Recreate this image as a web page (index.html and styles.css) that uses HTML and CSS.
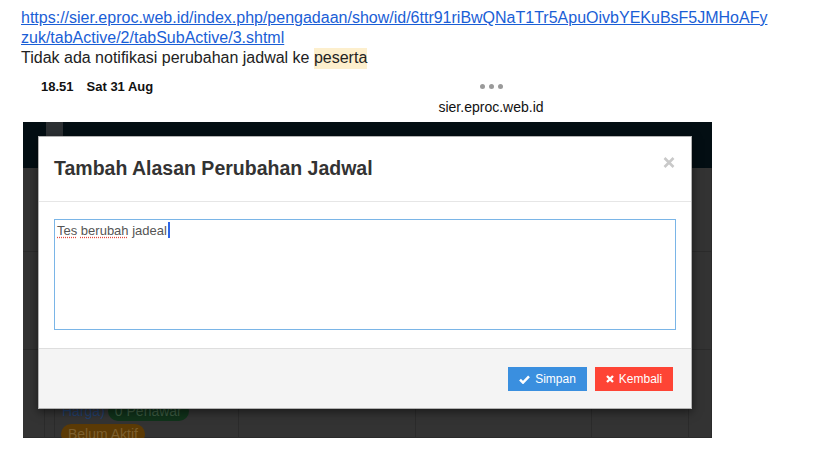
FILE: index.html
```html
<!DOCTYPE html>
<html lang="id">
<head>
<meta charset="utf-8">
<title>Tambah Alasan Perubahan Jadwal</title>
<link rel="stylesheet" href="styles.css">
</head>
<body>
<div class="mail">
  <a class="link" href="#">https://sier.eproc.web.id/index.php/pengadaan/show/id/6ttr91riBwQNaT1Tr5ApuOivbYEKuBsF5JMHoAFy<br>zuk/tabActive/2/tabSubActive/3.shtml</a>
  <div class="note">Tidak ada notifikasi perubahan jadwal ke <mark class="hl">peserta</mark></div>
</div>
<div class="shot">
  <div class="status">
    <div class="time"><span>18.51</span><span class="date">Sat 31 Aug</span></div>
    <div class="addr">
      <div class="dots"><i></i><i></i><i></i></div>
      <div class="host">sier.eproc.web.id</div>
    </div>
  </div>
  <div class="screen">
    <div class="topbar"><span class="tb-icon"></span></div>
    <div class="table">
      <div class="cell"></div><div class="cell"></div><div class="cell"></div><div class="cell"></div><div class="cell"></div><div class="cell"></div><div class="cell"></div>
      <div class="cell"></div><div class="cell"></div><div class="cell"></div><div class="cell"></div><div class="cell"></div><div class="cell"></div><div class="cell"></div>
      <div class="cell"></div><div class="cell"></div>
      <div class="cell info">
        <div class="line"><span class="harga">Harga)</span><span class="badge green">0 Penawar</span></div>
        <div class="line"><span class="badge orange">Belum Aktif</span></div>
      </div>
      <div class="cell"></div><div class="cell"></div><div class="cell"></div><div class="cell"></div>
    </div>
    <div class="modal">
      <div class="modal-header">
        <h4 class="modal-title">Tambah Alasan Perubahan Jadwal</h4>
        <svg class="close" width="12" height="11" viewBox="0 0 12 11"><path d="M1.5 1 L10.5 10 M10.5 1 L1.5 10" stroke="#c9c9c9" stroke-width="2.6" fill="none"/></svg>
      </div>
      <div class="modal-body">
        <div class="textarea"><span class="typo">Tes</span> <span class="typo">berubah</span> jadeal<span class="caret"></span></div>
      </div>
      <div class="modal-footer">
        <button class="btn btn-save" type="button"><svg width="11" height="9" viewBox="0 0 11 9"><path d="M1 4.6 L4 7.6 L10 1.4" stroke="#fff" stroke-width="2.5" fill="none"/></svg>Simpan</button>
        <button class="btn btn-back" type="button"><svg width="8" height="8" viewBox="0 0 8 8"><path d="M1 1 L7 7 M7 1 L1 7" stroke="#fff" stroke-width="2.3" fill="none"/></svg>Kembali</button>
      </div>
    </div>
  </div>
</div>
</body>
</html>
```
FILE: styles.css
```css
* { box-sizing: border-box; }
body {
  margin: 0;
  background: #fff;
  font-family: "Liberation Sans", Arial, sans-serif;
  color: #222;
}
.mail {
  padding: 8px 0 0 21px;
  font-size: 16px;
  line-height: 20px;
}
.link {
  display: block;
  color: #1a5ed6;
  text-decoration: underline;
}
.note { color: #222; }
.hl {
  background: #fdefcd;
  color: #222;
  padding: 1px 0 3px;
}
.shot {
  margin-left: 23px;
  width: 689px;
}
.status {
  height: 54px;
  display: grid;
  grid-template-columns: 403px 130px;
}
.time {
  padding: 11px 0 0 18px;
  font-size: 13px;
  line-height: 16px;
  font-weight: 700;
  color: #111;
}
.date { margin-left: 13px; }
.addr {
  display: flex;
  flex-direction: column;
  align-items: center;
  padding-top: 16px;
}
.dots { display: flex; gap: 4px; height: 5px; }
.dots i {
  display: block;
  width: 5px;
  height: 5px;
  border-radius: 50%;
  background: #9a9a9a;
}
.host {
  margin-top: 10px;
  font-size: 14px;
  line-height: 17px;
  color: #111;
}
.screen {
  position: relative;
  height: 316px;
  background: #333;
  overflow: hidden;
}
.topbar {
  height: 46px;
  background: #030e13;
  padding-left: 23px;
}
.tb-icon {
  display: block;
  width: 17px;
  height: 14px;
  background: #2c3033;
}
.table {
  display: grid;
  grid-template-columns: 22px 10px 184px 177px 176px 97px 23px;
  grid-template-rows: 84px 98px 88px;
}
.cell {
  border-right: 1px solid #2b2b2b;
  border-bottom: 1px solid #2b2b2b;
}
.info {
  padding: 51px 0 0 7px;
  font-size: 13px;
  line-height: 20px;
  white-space: nowrap;
}
.line { display: flex; align-items: center; gap: 3px; margin-bottom: 3px; }
.line .orange { margin-left: -1px; }
.harga { color: #213f6c; font-size: 14px; }
.badge {
  display: inline-block;
  height: 20px;
  line-height: 20px;
  border-radius: 10px;
  text-align: center;
  font-size: 14px;
}
.green { background: #10321a; color: #3d5b42; width: 81px; }
.orange { background: #5b3a05; color: #7d5f2d; width: 84px; }
.modal {
  position: absolute;
  left: 15px;
  top: 14px;
  width: 654px;
  background: #fff;
  border: 1px solid rgba(0, 0, 0, 0.3);
  box-shadow: 0 3px 9px rgba(0, 0, 0, 0.5);
}
.modal-header {
  height: 65px;
  padding: 20px 16px 0 15px;
  border-bottom: 1px solid #e6e6e6;
  display: flex;
  justify-content: space-between;
  align-items: flex-start;
}
.modal-title {
  margin: 0;
  font-size: 19.5px;
  line-height: 22px;
  font-weight: 700;
  color: #333;
}
.close { margin-top: 0; }
.modal-body {
  padding: 17px 15px 18px 15px;
}
.textarea {
  height: 111px;
  border: 1px solid #7ab5e7;
  padding: 3px 2px;
  font-size: 13px;
  line-height: 16px;
  color: #555;
}
.typo {
  text-decoration: underline dotted #e24a3f;
  text-underline-offset: 2px;
}
.caret {
  display: inline-block;
  width: 2px;
  height: 16px;
  margin-left: 1px;
  vertical-align: top;
  margin-top: -1px;
  background: #2f66e6;
}
.modal-footer {
  height: 60px;
  padding: 18px 18px 0 0;
  background: #f4f4f4;
  border-top: 1px solid #dedede;
  display: flex;
  justify-content: flex-end;
  gap: 8px;
}
.btn {
  height: 24px;
  border: 0;
  border-radius: 0;
  padding: 0;
  display: inline-flex;
  align-items: center;
  justify-content: center;
  gap: 5px;
  font-family: "Liberation Sans", Arial, sans-serif;
  font-size: 12px;
  color: #fff;
}
.btn-save { width: 79px; background: #3a8fdf; }
.btn-back { width: 78px; background: #fe4435; }
```
